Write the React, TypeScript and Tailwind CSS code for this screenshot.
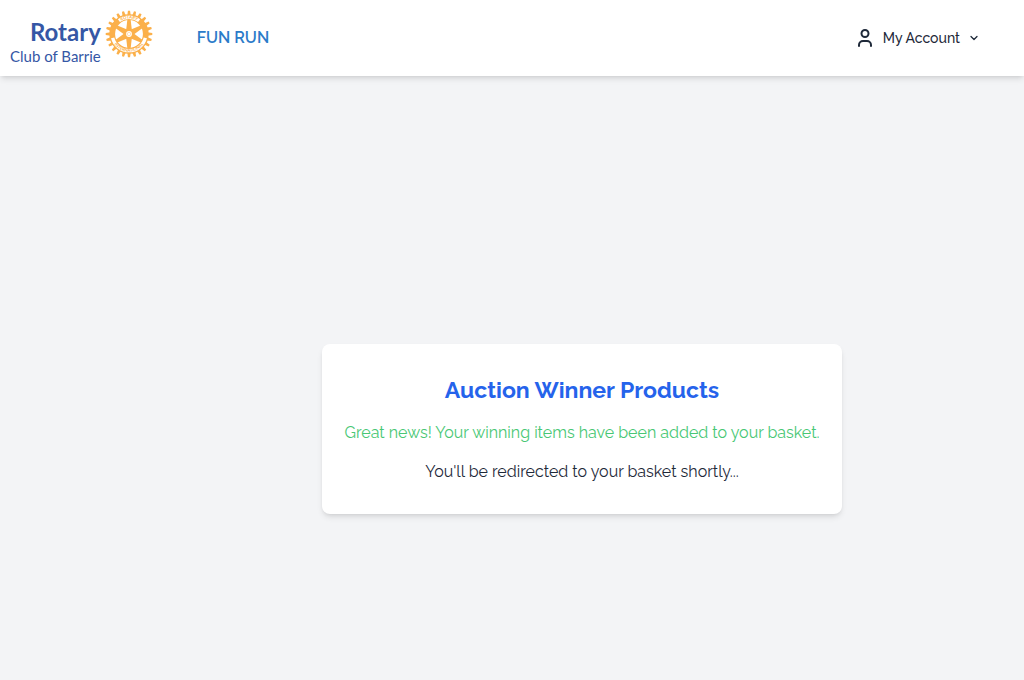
import React from "react";
import { ChevronDown } from "lucide-react";

const teeth = Array.from({ length: 24 }, (_, i) => i * 15);
const spokes = [0, 60, 120, 180, 240, 300];

function RotaryWheel() {
  return (
    <svg viewBox="-50 -50 100 100" className="size-12 shrink-0" aria-hidden="true">
      <defs>
        <path id="wheel-top" d="M-32 0A32 32 0 0 1 32 0" />
        <path id="wheel-bottom" d="M-37 0A37 37 0 0 0 37 0" />
      </defs>
      <g fill="#fbb04a">
        {teeth.map((a) => (
          <path key={a} d="M-3.6-38L-2.2-48.5H2.2L3.6-38Z" transform={`rotate(${a})`} />
        ))}
        {spokes.map((a) => (
          <path key={a} d="M-6-8L-3.4-30H3.4L6-8Z" transform={`rotate(${a})`} />
        ))}
        <circle r="11" />
      </g>
      <circle r="35" fill="none" stroke="#fbb04a" strokeWidth="12" />
      <path d="M-21-28A35 35 0 0 1 21-28" fill="none" stroke="#fff" strokeWidth="7" />
      <path d="M-34 8A35 35 0 0 0 34 8" fill="none" stroke="#fff" strokeWidth="7" />
      <g fill="#fbb04a" fontSize="9" fontWeight="700" textAnchor="middle">
        <text>
          <textPath href="#wheel-top" startOffset="50%">ROTARY</textPath>
        </text>
        <text>
          <textPath href="#wheel-bottom" startOffset="50%">INTERNATIONAL</textPath>
        </text>
      </g>
      <circle r="6" fill="#fff" />
      <circle r="3.5" fill="none" stroke="#fbb04a" strokeOpacity=".5" strokeWidth="1.5" />
    </svg>
  );
}

export default function App() {
  return (
    <div className="flex min-h-screen flex-col bg-[#f3f4f6] font-['Raleway','Lato',sans-serif] text-gray-800">
      <header className="relative flex h-[76px] items-center justify-between bg-white pr-11 pl-[10px] shadow-md">
        <div className="flex items-center gap-11">
          <a
            href="#home"
            className="flex h-14 items-start gap-1 font-['Lato',sans-serif] text-[#3557a5]"
          >
            <span className="flex flex-col items-end pt-2">
              <span className="text-2xl leading-7 font-bold">Rotary</span>
              <span className="text-[15px] leading-5">Club of Barrie</span>
            </span>
            <RotaryWheel />
          </a>
          <nav>
            <a href="#fun-run" className="text-base font-semibold text-[#2b7bc9]">
              FUN RUN
            </a>
          </nav>
        </div>
        <button type="button" className="flex items-center text-sm font-medium text-gray-800">
          <svg
            viewBox="0 0 16 20"
            className="mr-[10px] h-5 w-4"
            fill="none"
            stroke="currentColor"
            strokeWidth="2"
            strokeLinecap="round"
            aria-hidden="true"
          >
            <circle cx="8" cy="5.5" r="3.5" />
            <path d="M2 18v-1a4 4 0 0 1 4-4h4a4 4 0 0 1 4 4v1" />
          </svg>
          My Account
          <ChevronDown className="ml-2 size-3" strokeWidth={2.5} aria-hidden="true" />
        </button>
      </header>
      <main className="flex grow items-center justify-center pt-[102px] pl-[140px]">
        <section className="w-full max-w-[520px] rounded-lg bg-white px-5 py-[30px] text-center shadow-md">
          <h1 className="mb-[15px] text-[23px] leading-8 font-bold text-[#2563eb]">
            Auction Winner Products
          </h1>
          <p className="mb-[15px] text-base leading-6 text-[#48c774]">
            Great news! Your winning items have been added to your basket.
          </p>
          <p className="text-base leading-6">You'll be redirected to your basket shortly...</p>
        </section>
      </main>
    </div>
  );
}
